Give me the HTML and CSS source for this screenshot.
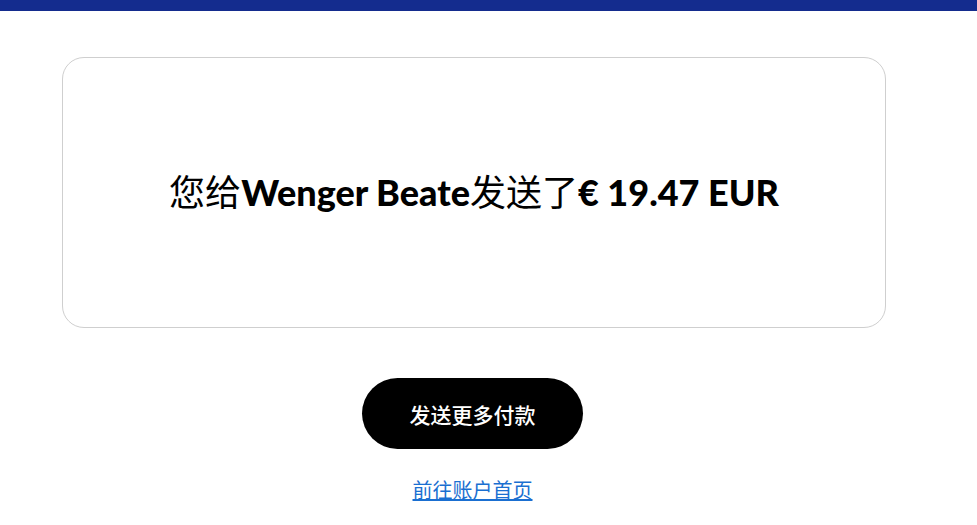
FILE: index.html
```html
<!DOCTYPE html>
<html lang="zh-CN">
<head>
    <meta charset="UTF-8">
    <meta name="viewport" content="width=device-width, initial-scale=1.0">
    <title>付款已发送</title>
    <link rel="stylesheet" href="styles.css">
</head>
<body>
    <div class="top-bar"></div>

    <main class="page">
        <div class="result-card">
            <h1 class="result-title">您给<strong>Wenger Beate</strong>发送了<strong>&euro; 19.47 EUR</strong></h1>
        </div>

        <div class="actions">
            <a class="btn-primary" href="#">发送更多付款</a>
            <a class="link-home" href="#">前往账户首页</a>
        </div>
    </main>
</body>
</html>
```

FILE: styles.css
```css
body {
    margin: 0;
    font-family: Lato, "Noto Sans CJK SC", sans-serif;
    background-color: #fff;
    color: #000;
}
.top-bar {
    height: 11px;
    background-color: #142c8e;
}
.page {
    width: 824px;
    margin: 46px 0 0 62px;
}
.result-card {
    height: 271px;
    box-sizing: border-box;
    border: 1px solid #cfcfcf;
    border-radius: 22px;
    display: flex;
    align-items: center;
    justify-content: center;
    padding-bottom: 6px;
}
.result-title {
    margin: 0;
    font-size: 36px;
    font-weight: 400;
}
.result-title strong {
    font-weight: 900;
}
.actions {
    display: flex;
    flex-direction: column;
    align-items: center;
    margin-top: 50px;
    padding-right: 3px;
}
.btn-primary {
    width: 221px;
    height: 71px;
    border-radius: 36px;
    background-color: #000;
    color: #fff;
    display: flex;
    align-items: center;
    justify-content: center;
    font-size: 21px;
    font-weight: 500;
    text-decoration: none;
}
.link-home {
    margin-top: 26px;
    color: #1a6fd1;
    font-size: 20px;
}
```
